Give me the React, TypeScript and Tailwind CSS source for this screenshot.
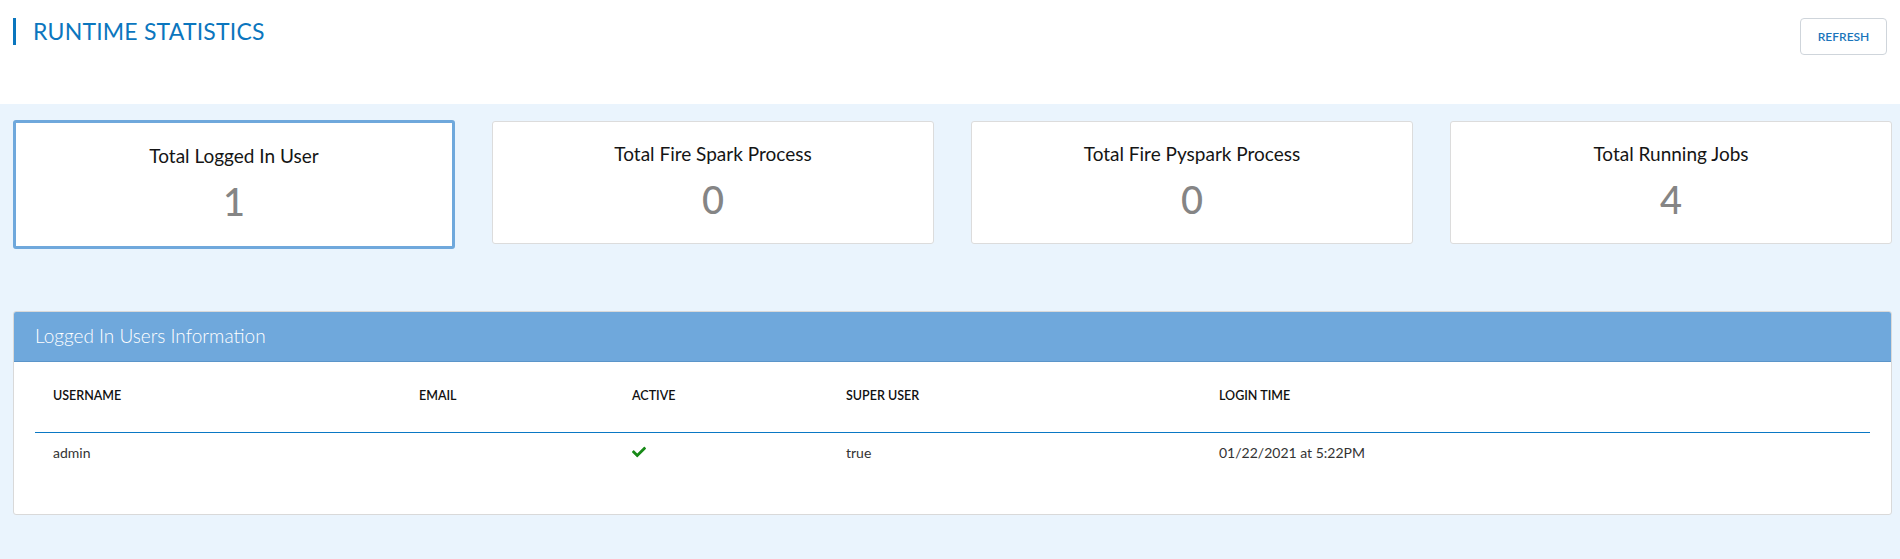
import { FaCheck } from "react-icons/fa";

type Stat = { label: string; value: number };

const stats: Stat[] = [
  { label: "Total Logged In User", value: 1 },
  { label: "Total Fire Spark Process", value: 0 },
  { label: "Total Fire Pyspark Process", value: 0 },
  { label: "Total Running Jobs", value: 4 },
];

const users = [
  { username: "admin", email: "", active: true, superUser: "true", loginTime: "01/22/2021 at 5:22PM" },
];

function StatCard({ stat, selected }: { stat: Stat; selected: boolean }) {
  return (
    <div
      className={
        selected
          ? "flex h-[129px] flex-col items-center rounded-[3px] border-[3px] border-[#6fa8dc] bg-white pt-[21px]"
          : "mt-[1px] flex h-[123px] flex-col items-center rounded-[3px] border border-[#dcdcdc] bg-white pt-[20px]"
      }
    >
      <div className="text-[19px] leading-[24px] text-[#151515]">{stat.label}</div>
      <div className="mt-[12px] text-[38px] font-medium leading-[42px] text-[#858585]">{stat.value}</div>
    </div>
  );
}

export default function App() {
  return (
    <div className="min-h-[559px] w-full bg-[#eaf4fd] font-['Lato',sans-serif]">
      <header className="flex h-[104px] items-start justify-between bg-white pl-[13px] pr-[13px] pt-[18px]">
        <h1 className="flex h-[27px] items-center border-l-[3px] border-[#0b76be] pl-[17px] text-[23px] font-normal tracking-[0.2px] text-[#0b76be]">
          RUNTIME STATISTICS
        </h1>
        <button
          type="button"
          className="h-[37px] w-[87px] rounded-[4px] border border-[#cfd5db] bg-white text-[12px] font-semibold text-[#1a75bb]"
        >
          REFRESH
        </button>
      </header>

      <section className="grid grid-cols-4 items-start gap-[37px] pl-[13px] pr-[8px] pt-[16px]">
        {stats.map((s, i) => (
          <StatCard key={s.label} stat={s} selected={i === 0} />
        ))}
      </section>

      <section className="ml-[13px] mr-[8px] mt-[62px] overflow-hidden rounded-[3px] border border-[#d9d9d9] bg-white">
        <div className="flex h-[50px] items-center border-b border-[#5b95c9] bg-[#6fa8dc] pl-[21px] text-[19px] font-light text-white">
          Logged In Users Information
        </div>
        <div className="px-[21px] pb-[42px]">
          <table className="w-full border-collapse text-left">
            <thead>
              <tr className="h-[70px]">
                <th className="w-[384px] border-b border-[#0a78c4] pl-[18px] text-[12.5px] font-semibold text-[#111]">USERNAME</th>
                <th className="w-[213px] border-b border-[#0a78c4] text-[12.5px] font-semibold text-[#111]">EMAIL</th>
                <th className="w-[214px] border-b border-[#0a78c4] text-[12.5px] font-semibold text-[#111]">ACTIVE</th>
                <th className="w-[373px] border-b border-[#0a78c4] text-[12.5px] font-semibold text-[#111]">SUPER USER</th>
                <th className="border-b border-[#0a78c4] text-[12.5px] font-semibold text-[#111]">LOGIN TIME</th>
              </tr>
            </thead>
            <tbody>
              {users.map((u) => (
                <tr key={u.username} className="h-[40px] text-[14px] text-[#333]">
                  <td className="pl-[18px]">{u.username}</td>
                  <td>{u.email}</td>
                  <td>{u.active ? <FaCheck className="h-[14px] w-[14px] text-[#188a18]" /> : null}</td>
                  <td>{u.superUser}</td>
                  <td>{u.loginTime}</td>
                </tr>
              ))}
            </tbody>
          </table>
        </div>
      </section>
    </div>
  );
}
